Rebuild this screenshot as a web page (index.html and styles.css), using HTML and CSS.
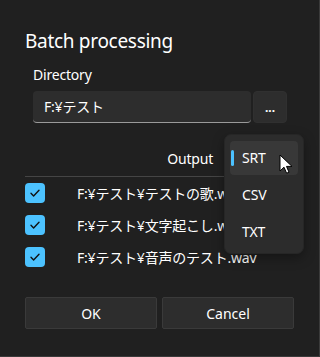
FILE: index.html
```html
<!DOCTYPE html>
<html lang="ja">
<head>
    <meta charset="UTF-8">
    <meta name="viewport" content="width=device-width, initial-scale=1.0">
    <title>Batch processing</title>
    <link rel="stylesheet" href="styles.css">
</head>
<body>

    <div class="dialog">
        <h1 class="title">Batch processing</h1>

        <!-- Directory -->
        <div class="field">
            <div class="field-label">Directory</div>
            <div class="dir-row">
                <div class="textbox">F:¥テスト</div>
                <button class="browse-btn">...</button>
            </div>
        </div>

        <!-- Output format -->
        <div class="output-row">
            <span class="output-label">Output</span>
        </div>

        <!-- File list -->
        <ul class="file-list">
            <li class="file-item">
                <span class="check"><svg viewBox="0 0 20 20" width="20" height="20"><path d="M6 10.3l2.6 2.6 5.4-5.6" fill="none" stroke="#111" stroke-width="1.4" stroke-linecap="round" stroke-linejoin="round"/></svg></span>
                <span class="file-name">F:¥テスト¥テストの歌.wav</span>
            </li>
            <li class="file-item">
                <span class="check"><svg viewBox="0 0 20 20" width="20" height="20"><path d="M6 10.3l2.6 2.6 5.4-5.6" fill="none" stroke="#111" stroke-width="1.4" stroke-linecap="round" stroke-linejoin="round"/></svg></span>
                <span class="file-name">F:¥テスト¥文字起こし.wav</span>
            </li>
            <li class="file-item">
                <span class="check"><svg viewBox="0 0 20 20" width="20" height="20"><path d="M6 10.3l2.6 2.6 5.4-5.6" fill="none" stroke="#111" stroke-width="1.4" stroke-linecap="round" stroke-linejoin="round"/></svg></span>
                <span class="file-name">F:¥テスト¥音声のテスト.wav</span>
            </li>
        </ul>

        <!-- Buttons -->
        <div class="actions">
            <button class="action-btn">OK</button>
            <button class="action-btn">Cancel</button>
        </div>

        <!-- Open dropdown -->
        <div class="dropdown">
            <div class="dropdown-item selected">SRT</div>
            <div class="dropdown-item">CSV</div>
            <div class="dropdown-item">TXT</div>
        </div>

        <svg class="pointer" width="14" height="21" viewBox="0 0 14 21">
            <path d="M1 1v16l4-3.8 2.6 6 2.4-1-2.5-5.8H13z" fill="#fff" stroke="#000" stroke-width="1" stroke-linejoin="round"/>
        </svg>
    </div>

</body>
</html>
```

FILE: styles.css
```css
/* General Styling */
body {
    margin: 0;
    padding: 0;
    background-color: #202020;
    font-family: 'Noto Sans', 'Noto Sans CJK JP', sans-serif;
    letter-spacing: -0.2px;
    color: #ffffff;
}

.dialog {
    position: relative;
    box-sizing: border-box;
    width: 320px;
    height: 357px;
    padding: 27px 25px 0 25px;
    background-color: #202020;
    border-right: 1px solid #3a3a3a;
    border-bottom: 1px solid #3a3a3a;
    overflow: hidden;
}

.title {
    margin: 0;
    font-size: 19px;
    font-weight: 400;
    line-height: 28px;
    letter-spacing: -0.3px;
}

/* Directory */
.field {
    margin-top: 11px;
    padding-left: 8px;
}

.field-label {
    font-size: 14px;
    line-height: 18px;
}

.dir-row {
    display: flex;
    gap: 2px;
    margin-top: 7px;
}

.textbox {
    box-sizing: border-box;
    width: 218px;
    height: 32px;
    padding: 0 11px;
    font-size: 14px;
    line-height: 31px;
    background-color: #2d2d2d;
    border-radius: 4px;
    border-bottom: 1px solid #9a9a9a;
}

.browse-btn {
    width: 34px;
    height: 32px;
    padding: 0;
    background-color: #2d2d2d;
    border: 1px solid #303030;
    border-radius: 4px;
    color: #ffffff;
    font-family: inherit;
    font-size: 12px;
    font-weight: 700;
}

/* Output */
.output-row {
    display: flex;
    justify-content: flex-end;
    align-items: center;
    height: 36px;
    margin-top: 17px;
    padding-right: 81px;
    border-bottom: 1px solid #454545;
}

.output-label {
    font-size: 14px;
}

/* File list */
.file-list {
    list-style: none;
    margin: 0;
    padding: 0;
}

.file-item {
    display: flex;
    align-items: center;
    gap: 32px;
    height: 32px;
}

.check {
    display: flex;
    width: 20px;
    height: 20px;
    border-radius: 4px;
    background-color: #4cc2ff;
}

.file-name {
    font-size: 14px;
}

/* Buttons */
.actions {
    display: flex;
    gap: 5px;
    margin-top: 24px;
}

.action-btn {
    width: 133px;
    height: 32px;
    background-color: #2d2d2d;
    border: 1px solid #3a3a3a;
    border-radius: 2px;
    color: #ffffff;
    font-family: inherit;
    font-size: 14px;
}

/* Dropdown popup */
.dropdown {
    position: absolute;
    top: 134px;
    left: 224px;
    box-sizing: border-box;
    width: 80px;
    height: 120px;
    padding: 6px 5px;
    display: flex;
    flex-direction: column;
    gap: 3px;
    background-color: #2c2c2c;
    border: 1px solid #262626;
    border-radius: 7px;
    box-shadow: 0 4px 12px rgba(0, 0, 0, 0.35);
}

.dropdown-item {
    position: relative;
    height: 34px;
    padding-left: 12px;
    font-size: 14px;
    line-height: 34px;
    border-radius: 4px;
}

.dropdown-item.selected {
    background-color: #383838;
}

.dropdown-item.selected::before {
    content: "";
    position: absolute;
    left: 1px;
    top: 9px;
    width: 3px;
    height: 16px;
    border-radius: 2px;
    background-color: #4cc2ff;
}

.pointer {
    position: absolute;
    top: 154px;
    left: 279px;
}
```
